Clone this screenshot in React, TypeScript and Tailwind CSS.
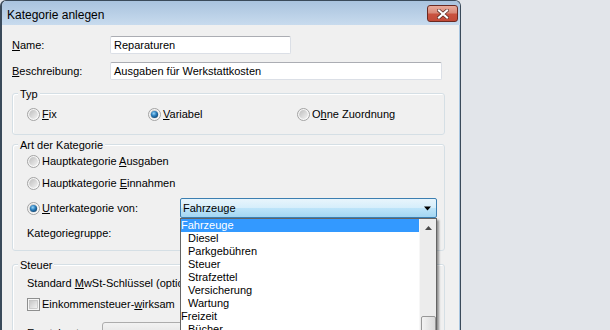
import React from "react";

function Radio({ checked }: { checked?: boolean }) {
  return (
    <svg width="13" height="13" viewBox="0 0 13 13" className="shrink-0">
      <defs>
        <linearGradient id="rOuter" x1="0" y1="0" x2="1" y2="1">
          <stop offset="0" stopColor="#f0f0f0" />
          <stop offset="1" stopColor="#fdfdfd" />
        </linearGradient>
        <linearGradient id="rInner" x1="0" y1="0" x2="1" y2="1">
          <stop offset="0" stopColor="#bdbdbd" />
          <stop offset="1" stopColor="#f3f3f3" />
        </linearGradient>
        <radialGradient id="rDot" cx="0.4" cy="0.35" r="0.75">
          <stop offset="0" stopColor="#9ad6f7" />
          <stop offset="0.45" stopColor="#2c80bf" />
          <stop offset="1" stopColor="#0c3a63" />
        </radialGradient>
      </defs>
      <circle cx="6.5" cy="6.5" r="6" fill="url(#rOuter)" stroke="#a2a2a2" />
      <circle cx="6.5" cy="6.5" r="4.4" fill="url(#rInner)" />
      {checked && <circle cx="6.5" cy="6.5" r="3.6" fill="url(#rDot)" />}
    </svg>
  );
}

function Checkbox() {
  return (
    <svg width="13" height="13" viewBox="0 0 13 13" className="shrink-0">
      <defs>
        <linearGradient id="cInner" x1="0" y1="0" x2="1" y2="1">
          <stop offset="0" stopColor="#c4c4c4" />
          <stop offset="1" stopColor="#f4f4f4" />
        </linearGradient>
      </defs>
      <rect x="0.5" y="0.5" width="12" height="12" fill="#f6f6f6" stroke="#8e8f8f" />
      <rect x="2.5" y="2.5" width="8" height="8" fill="url(#cInner)" stroke="#b5b5b5" strokeWidth="0.6" />
    </svg>
  );
}

function RadioItem({
  checked,
  className = "",
  children,
}: {
  checked?: boolean;
  className?: string;
  children: React.ReactNode;
}) {
  return (
    <div className={`flex items-center gap-[2px] h-[16px] ${className}`}>
      <Radio checked={checked} />
      <span className="whitespace-nowrap">{children}</span>
    </div>
  );
}

function U({ children }: { children: React.ReactNode }) {
  return <span className="underline">{children}</span>;
}

function TextBox({ w, children }: { w: string; children?: React.ReactNode }) {
  return (
    <div
      className={`${w} h-[18px] bg-white border border-[#dbdfe6] border-t-[#abadb3] rounded-[2px] flex items-center pl-[3px] whitespace-nowrap`}
    >
      {children}
    </div>
  );
}

function Group({
  title,
  className = "",
  children,
}: {
  title: string;
  className?: string;
  children: React.ReactNode;
}) {
  return (
    <div
      className={`w-[433px] border border-[#d5dfe5] rounded-[3px] shadow-[inset_1px_1px_0_#ffffff] flex flex-col ${className}`}
    >
      <div className="-mt-[7px] ml-[5px] px-[2px] w-fit h-[14px] leading-[14px] bg-[#f0f0f0]">
        {title}
      </div>
      {children}
    </div>
  );
}

function PlainCombo({ h = "h-[20px]" }: { h?: string }) {
  return (
    <div
      className={`w-[257px] ${h} border border-[#707070] rounded-[2px] bg-linear-to-b from-[#f2f2f2] to-[#dcdcdc]`}
    />
  );
}

const items: { t: string; sub?: boolean; sel?: boolean }[] = [
  { t: "Fahrzeuge", sel: true },
  { t: "Diesel", sub: true },
  { t: "Parkgebühren", sub: true },
  { t: "Steuer", sub: true },
  { t: "Strafzettel", sub: true },
  { t: "Versicherung", sub: true },
  { t: "Wartung", sub: true },
  { t: "Freizeit" },
  { t: "Bücher", sub: true },
  { t: "Hobby", sub: true },
];

function FocusCombo() {
  return (
    <div className="relative w-[257px] h-[20px]">
      <div className="w-[257px] h-[20px] border border-[#3c7fb1] rounded-[2px] bg-[linear-gradient(to_bottom,#e8f5fc_0%,#d6eefb_48%,#bde4f9_52%,#a3d6f2_100%)] flex items-center pl-[2px] pr-[5px]">
        <span className="flex-1">Fahrzeuge</span>
        <svg width="7" height="5" viewBox="0 0 7 5">
          <path d="M0 0.5H7L3.5 4.5Z" fill="#000" />
        </svg>
      </div>
      <div className="absolute left-0 top-[20px] z-10 w-[257px] h-[130px] bg-white border border-[#646464] shadow-[2px_2px_2px_rgba(0,0,0,0.4)] flex">
        <div className="w-[238px] flex flex-col">
          {items.map((it) => (
            <div
              key={it.t}
              className={`h-[13px] leading-[13px] whitespace-nowrap ${
                it.sub ? "pl-[7px]" : "pl-[0px]"
              } ${it.sel ? "bg-[#3399ff] text-white" : "text-black"}`}
            >
              {it.t}
            </div>
          ))}
        </div>
        <div className="w-[17px] bg-[#ececec] border-l border-[#f7f7f7] flex flex-col items-center">
          <div className="h-[17px] w-full flex items-center justify-center">
            <svg width="7" height="4" viewBox="0 0 7 4">
              <path d="M3.5 0L7 4H0Z" fill="#4a4a4a" />
            </svg>
          </div>
          <div className="mt-[80px] w-[15px] h-[30px] border border-[#979797] rounded-[2px] bg-linear-to-r from-[#f3f3f3] to-[#dadada]" />
        </div>
      </div>
    </div>
  );
}

export default function App() {
  return (
    <div className="w-[610px] h-[330px] overflow-hidden bg-[#e2e5ea] flex items-start font-['Liberation_Sans',Arial,sans-serif] text-black">
      <div className="w-[461px] h-[330px] flex flex-col rounded-t-[6px] border-t border-l-2 border-r border-[#3a4a5a] overflow-hidden">
        {/* Title bar */}
        <div className="h-[24px] shrink-0 flex items-start justify-between bg-linear-to-b from-[#a9c3de] to-[#c8dbee] pl-[5px] pr-[2px]">
          <span className="mt-[7px] text-[12px] leading-[14px]">Kategorie anlegen</span>
          <div className="mt-[4px] w-[31px] h-[17px] rounded-[3px] border border-[#6a2a22] bg-[linear-gradient(to_bottom,#e9ab9b_0%,#d98a79_45%,#c9523f_55%,#c24a38_100%)] flex items-center justify-center">
            <svg width="12" height="10" viewBox="0 0 12 10">
              <path d="M2 1.5L10 8.5M10 1.5L2 8.5" stroke="#5a2a24" strokeWidth="3.6" strokeLinecap="square" />
              <path d="M2 1.5L10 8.5M10 1.5L2 8.5" stroke="#ffffff" strokeWidth="2.2" strokeLinecap="square" />
            </svg>
          </div>
        </div>

        {/* Body */}
        <div className="flex-1 bg-[#f0f0f0] border-r border-[#a9c6e0] pl-[10px] flex flex-col text-[11px]">
          <div className="mt-[11px] h-[18px] flex items-center">
            <div className="w-[98px]">
              <U>N</U>ame:
            </div>
            <TextBox w="w-[181px]">Reparaturen</TextBox>
          </div>
          <div className="mt-[8px] h-[18px] flex items-center">
            <div className="w-[98px]">
              <U>B</U>eschreibung:
            </div>
            <TextBox w="w-[332px]">Ausgaben für Werkstattkosten</TextBox>
          </div>

          <Group title="Typ" className="mt-[13px]">
            <div className="mt-[5px] mb-[12px] h-[16px] flex items-center pl-[14px]">
              <RadioItem className="w-[121px]">
                <U>F</U>ix
              </RadioItem>
              <RadioItem className="w-[149px]" checked>
                <U>V</U>ariabel
              </RadioItem>
              <RadioItem>
                O<U>h</U>ne Zuordnung
              </RadioItem>
            </div>
          </Group>

          <Group title="Art der Kategorie" className="mt-[9px] relative z-10">
            <div className="mt-[1px] pl-[14px]">
              <RadioItem>
                Hauptkategorie <U>A</U>usgaben
              </RadioItem>
            </div>
            <div className="mt-[6px] pl-[14px]">
              <RadioItem>
                Hauptkategorie <U>E</U>innahmen
              </RadioItem>
            </div>
            <div className="mt-[7px] h-[20px] flex items-center pl-[14px]">
              <RadioItem className="w-[153px]" checked>
                <U>U</U>nterkategorie von:
              </RadioItem>
              <FocusCombo />
            </div>
            <div className="mt-[5px] mb-[7px] h-[20px] flex items-center pl-[14px]">
              <div className="w-[153px] whitespace-nowrap">
                Kategorie<U>g</U>ruppe:
              </div>
              <PlainCombo />
            </div>
          </Group>

          <Group title="Steuer" className="mt-[13px]">
            <div className="mt-[2px] h-[18px] flex items-center pl-[14px]">
              <div className="w-[153px] whitespace-nowrap overflow-hidden">
                Standard <U>M</U>wSt-Schlüssel (optional):
              </div>
              <PlainCombo h="h-[18px]" />
            </div>
            <div className="mt-[4px] h-[16px] flex items-center gap-[2px] pl-[14px]">
              <Checkbox />
              <span className="whitespace-nowrap">
                Einkommensteuer-<U>w</U>irksam
              </span>
            </div>
            <div className="mt-[10px] h-[22px] flex items-start pl-[14px]">
              <div className="mt-[5px] w-[75px] leading-[13px] whitespace-nowrap">
                <U>E</U>rsatzkonto:
              </div>
              <div className="w-[200px] h-[21px] border border-[#acacac] rounded-[3px] bg-linear-to-b from-[#f2f2f2] to-[#dddddd]" />
            </div>
          </Group>
        </div>
      </div>
    </div>
  );
}
